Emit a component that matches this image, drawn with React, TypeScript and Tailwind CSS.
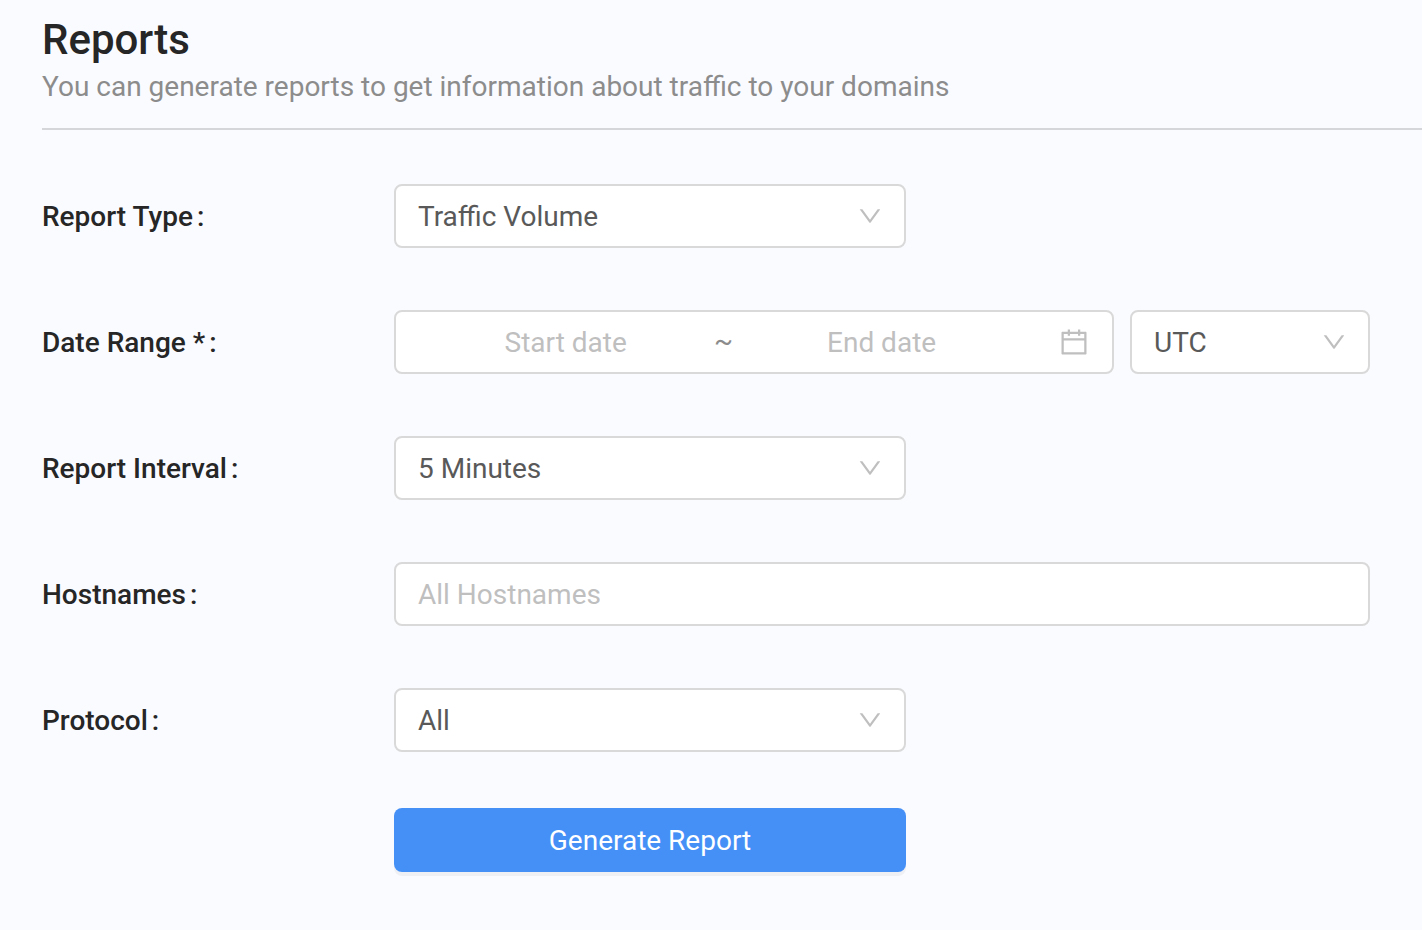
import type { ReactNode } from "react";

function Down() {
  return (
    <svg viewBox="64 64 896 896" className="h-6 w-6 shrink-0 fill-[#bfbfbf]">
      <path d="M884 256h-75c-5.1 0-9.9 2.5-12.9 6.6L512 654.2 227.9 262.6c-3-4.100-7.800-6.600-12.900-6.600h-75c-6.500 0-10.300 7.400-6.500 12.700l352.600 486.100c12.800 17.600 39 17.600 51.700 0l352.600-486.100c3.900-5.300.1-12.700-6.400-12.700z" />
    </svg>
  );
}

function CalendarIcon() {
  return (
    <svg viewBox="64 64 896 896" className="h-7 w-7 shrink-0 fill-[#bfbfbf]">
      <path d="M880 184H712v-64c0-4.400-3.600-8-8-8h-56c-4.400 0-8 3.600-8 8v64H384v-64c0-4.400-3.600-8-8-8h-56c-4.400 0-8 3.600-8 8v64H144c-17.700 0-32 14.300-32 32v664c0 17.700 14.300 32 32 32h736c17.700 0 32-14.300 32-32V216c0-17.700-14.300-32-32-32zm-40 656H184V460h656v380zM184 392V256h128v48c0 4.400 3.600 8 8 8h56c4.400 0 8-3.600 8-8v-48h256v48c0 4.400 3.600 8 8 8h56c4.400 0 8-3.600 8-8v-48h128v136H184z" />
    </svg>
  );
}

function Select({ value, width }: { value: string; width: string }) {
  return (
    <div className={`flex h-16 items-center justify-between rounded-lg border-2 border-[#d9d9d9] bg-white px-[22px] text-[#595959] ${width}`}>
      <span className="pt-0.5">{value}</span>
      <Down />
    </div>
  );
}

function Field({ label, children }: { label: string; children: ReactNode }) {
  return (
    <div className="flex h-16 items-center">
      <div className="flex w-[352px] shrink-0 pt-0.5 font-medium text-[#262626]">
        <span>{label}</span>
        <span className="ml-1">:</span>
      </div>
      {children}
    </div>
  );
}

export default function App() {
  return (
    <main className="h-[930px] overflow-hidden bg-[#fafbff] pl-[42px] font-['Roboto',sans-serif] text-[28px] leading-[44px]">
      <header className="h-[130px] border-b-2 border-[#d5d6da] pt-4">
        <h1 className="mb-px text-[42px] font-medium leading-[48px] text-[#262626]">Reports</h1>
        <p className="text-[#8c8c8c]">You can generate reports to get information about traffic to your domains</p>
      </header>
      <form className="mt-[54px] flex flex-col gap-[62px]">
        <Field label="Report Type">
          <Select value="Traffic Volume" width="w-[512px]" />
        </Field>
        <Field label="Date Range *">
          <div className="flex h-16 w-[720px] items-center rounded-lg border-2 border-[#d9d9d9] bg-white pr-6 text-[#bfbfbf]">
            <span className="ml-[108.5px] w-[209.5px] pt-0.5">Start date</span>
            <span className="w-[113px] pb-0.5 text-[#8c8c8c]">~</span>
            <span className="flex-1 pt-0.5">End date</span>
            <CalendarIcon />
          </div>
          <div className="ml-4">
            <Select value="UTC" width="w-[240px]" />
          </div>
        </Field>
        <Field label="Report Interval">
          <Select value="5 Minutes" width="w-[512px]" />
        </Field>
        <Field label="Hostnames">
          <div className="flex h-16 w-[976px] items-center rounded-lg border-2 border-[#d9d9d9] bg-white px-[22px] pt-0.5 text-[#bfbfbf]">All Hostnames</div>
        </Field>
        <Field label="Protocol">
          <Select value="All" width="w-[512px]" />
        </Field>
      </form>
      <button className="ml-[352px] mt-14 block h-16 w-[512px] rounded-lg bg-[#4590f7] pt-0.5 text-white shadow-[0_4px_0_rgba(0,0,0,0.043)]">Generate Report</button>
    </main>
  );
}
